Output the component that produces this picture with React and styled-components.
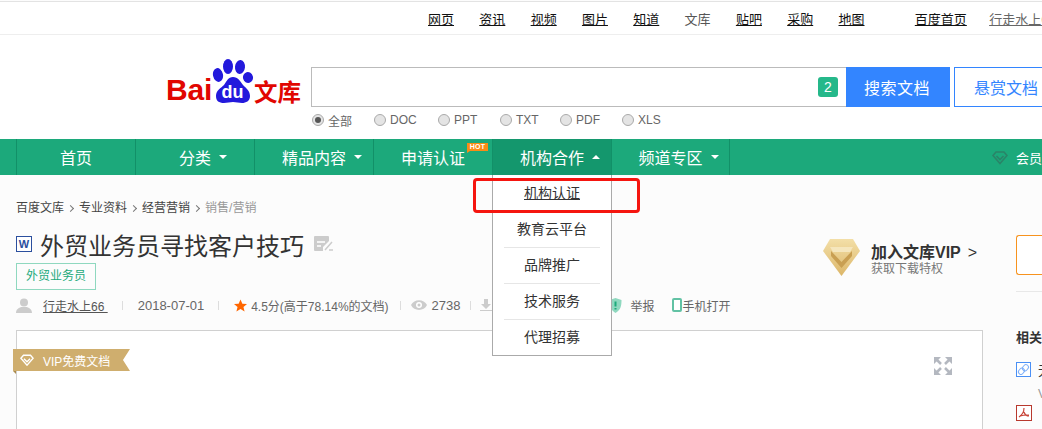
import styled, { createGlobalStyle } from 'styled-components';

const GlobalStyle = createGlobalStyle`
  html, body {
    margin: 0;
    padding: 0;
    height: 100%;
    overflow: hidden;
    background: #fcfcfc;
  }
  body {
    font-family: "Liberation Sans", "Noto Sans CJK SC", sans-serif;
    color: #333;
  }
`;

const Page = styled.div`
  width: 1042px;
  height: 429px;
  overflow: hidden;
  position: relative;
`;

const TopBar = styled.div`
  height: 32px;
  margin-top: 1px;
  border-top: 1px solid #e3e3e3;
  border-bottom: 1px solid #eee;
  background: #fff;
  display: flex;
  align-items: center;
  padding-left: 428px;
  white-space: nowrap;
  font-size: 13px;
`;

const TopLink = styled.a`
  color: ${({ $plain }) => ($plain ? '#555' : '#111')};
  text-decoration: ${({ $plain }) => ($plain ? 'none' : 'underline')};
  margin-right: 25.3px;
`;

const TopSep = styled.span`
  width: 1px;
  height: 12px;
  background: #eee;
  margin: 0 23px 0 2px;
`;

const UserLink = styled.a`
  color: #666;
  text-decoration: underline;
  margin-left: -3px;
`;

const Header = styled.div`
  height: 104px;
  background: #fff;
  padding-left: 166px;
  display: flex;
  align-items: flex-start;
`;

const Logo = styled.div`
  width: 135px;
  height: 46px;
  margin-top: 23px;
  margin-right: 10px;
  display: flex;
  align-items: flex-end;
  flex-shrink: 0;
`;

const LogoLatin = styled.span`
  font-size: 30px;
  line-height: 30px;
  font-weight: 700;
  color: #e10601;
  width: 46px;
  letter-spacing: -0.2px;
  margin-bottom: -1px;
`;

const LogoCjk = styled.span`
  font-family: "Noto Sans CJK SC", sans-serif;
  font-size: 23.5px;
  line-height: 26px;
  font-weight: 700;
  color: #e10601;
  white-space: nowrap;
`;

const SearchArea = styled.div`
  margin-top: 32px;
  width: 760px;
  flex-shrink: 0;
`;

const SearchRow = styled.div`
  display: flex;
  height: 40px;
`;

const SearchInput = styled.div`
  width: 535px;
  box-sizing: border-box;
  border: 1px solid #bbb;
  border-right: none;
  background: #fff;
  display: flex;
  align-items: center;
  justify-content: flex-end;
  padding-right: 8px;
`;

const CountBadge = styled.span`
  width: 20px;
  height: 20px;
  border-radius: 3px;
  background: #25b88a;
  color: #fff;
  font-size: 14px;
  display: flex;
  align-items: center;
  justify-content: center;
`;

const SearchButton = styled.button`
  width: 104px;
  height: 40px;
  border: none;
  padding: 0 2px 0 0;
  background: #3385ff;
  color: #fff;
  font: inherit;
  font-size: 16px;
  letter-spacing: 0.5px;
`;

const RewardButton = styled.button`
  width: 104px;
  height: 40px;
  margin-left: 4px;
  border: 1px solid #3385ff;
  padding: 0;
  background: #fff;
  color: #3385ff;
  font: inherit;
  font-size: 16px;
`;

const RadioRow = styled.div`
  display: flex;
  margin: 5px 0 0 1px;
  height: 16px;
  align-items: center;
  font-size: 12px;
  color: #666;
`;

const RadioOption = styled.label`
  display: flex;
  align-items: center;
  gap: 4px;
  width: ${({ $w }) => $w}px;
`;

const RadioDot = styled.span`
  width: 12px;
  height: 12px;
  box-sizing: border-box;
  border-radius: 50%;
  border: 1px solid #aaa;
  background: #e4e4e4;
  display: flex;
  align-items: center;
  justify-content: center;
  &::after {
    content: '';
    width: 6px;
    height: 6px;
    border-radius: 50%;
    background: ${({ $on }) => ($on ? '#555' : 'transparent')};
  }
`;

const Nav = styled.nav`
  height: 36px;
  background: #1ca97b;
  display: flex;
  padding-left: 16px;
  position: relative;
  color: #fff;
`;

const NavItem = styled.div`
  width: 119px;
  box-sizing: border-box;
  flex-shrink: 0;
  border-left: 1px solid #129068;
  border-right: ${({ $last }) => ($last ? '1px solid #129068' : 'none')};
  background: ${({ $active }) => ($active ? '#14976d' : 'transparent')};
  display: flex;
  align-items: center;
  justify-content: center;
  font-size: 16px;
  position: relative;
`;

const NavLabel = styled.span`
  position: relative;
`;

const Caret = styled.span`
  position: absolute;
  right: -16px;
  top: 50%;
  margin-top: -2px;
  width: 0;
  height: 0;
  border-left: 4px solid transparent;
  border-right: 4px solid transparent;
  ${({ $up }) =>
    $up ? 'border-bottom: 4px solid #fff;' : 'border-top: 4px solid #fff;'}
`;

const HotTag = styled.span`
  position: absolute;
  left: 93px;
  top: 4px;
  width: 21px;
  height: 8px;
  background: #fa8c16;
  color: #fff;
  font-size: 7px;
  line-height: 8px;
  font-weight: 700;
  text-align: center;
  letter-spacing: 0.3px;
  &::after {
    content: '';
    position: absolute;
    left: 0;
    top: 8px;
    border-top: 2px solid #fa8c16;
    border-right: 3px solid transparent;
  }
`;

const NavRight = styled.div`
  margin-left: auto;
  display: flex;
  align-items: center;
  gap: 8px;
  font-size: 13px;
  white-space: nowrap;
  width: 50px;
`;

const Dropdown = styled.div`
  position: absolute;
  left: 492px;
  top: 175px;
  width: 120px;
  height: 181px;
  box-sizing: border-box;
  border: 1px solid #aaa;
  border-top: none;
  background: #fff;
  z-index: 5;
  padding: 0 11px;
`;

const DropItem = styled.a`
  display: block;
  height: 36px;
  line-height: ${({ $first, $noLine }) => ($first || $noLine ? 36 : 34)}px;
  text-align: center;
  font-size: 14px;
  color: #333;
  box-sizing: border-box;
  border-top: ${({ $first, $noLine }) =>
    $first || $noLine ? 'none' : '1px solid #e6e6e6'};
  text-decoration: ${({ $first }) => ($first ? 'underline' : 'none')};
`;

const RedMark = styled.div`
  position: absolute;
  left: 473px;
  top: 178px;
  width: 167px;
  height: 35px;
  box-sizing: border-box;
  border: 3px solid #f5150f;
  border-radius: 4px;
  z-index: 6;
`;

const Content = styled.div`
  padding: 26px 0 0 16px;
`;

const Crumbs = styled.div`
  display: flex;
  gap: 4px;
  font-size: 12px;
  line-height: 14px;
  color: #444;
  align-items: center;
`;

const CrumbArrow = styled.span`
  width: 4px;
  height: 4px;
  border-top: 1px solid #777;
  border-right: 1px solid #777;
  transform: rotate(45deg);
  margin: 0 2px 0 0;
`;

const CrumbLast = styled.span`
  color: #999;
`;

const HeadRow = styled.div`
  display: flex;
  height: 64px;
  margin-top: 11px;
`;

const HeadLeft = styled.div`
  width: 807px;
  flex-shrink: 0;
`;

const TitleRow = styled.div`
  display: flex;
  align-items: center;
  height: 36px;
  gap: 8px;
`;

const Title = styled.h1`
  margin: 0 2px 0 0;
  font-size: 24px;
  font-weight: 400;
  color: #333;
  white-space: nowrap;
`;

const WordIcon = styled.span`
  width: 16px;
  height: 16px;
  box-sizing: border-box;
  border: 1px solid #2b4f9e;
  color: #2b4f9e;
  font-size: 11px;
  line-height: 14px;
  font-weight: 700;
  text-align: center;
  background: #fff;
`;

const Tag = styled.span`
  display: block;
  width: 80px;
  height: 27px;
  line-height: 25px;
  box-sizing: border-box;
  text-align: center;
  border: 1px solid #8fd8bf;
  color: #1ca97b;
  font-size: 12px;
  margin-top: 1px;
`;

const VipPromo = styled.div`
  display: flex;
  align-items: flex-start;
  gap: 11px;
  width: 193px;
  flex-shrink: 0;
  padding-top: 13px;
`;

const VipText = styled.div`
  display: flex;
  flex-direction: column;
  padding-top: 5px;
`;

const VipTitle = styled.div`
  font-size: 16px;
  line-height: 18px;
  font-weight: 700;
  white-space: nowrap;
  color: #333;
`;

const VipArrow = styled.span`
  font-weight: 400;
  margin-left: 7px;
`;

const VipSub = styled.div`
  font-size: 12px;
  line-height: 14px;
  color: #777;
`;

const RightCol = styled.div`
  width: 40px;
  flex-shrink: 0;
  padding-top: 9px;
`;

const OrangeBox = styled.div`
  height: 40px;
  box-sizing: border-box;
  border: 1px solid #f7931e;
  border-right: none;
  border-radius: 3px 0 0 3px;
  background: #fff;
`;

const RightLine = styled.div`
  height: 1px;
  margin-top: 16px;
  background: #e8e8e8;
`;

const MetaRow = styled.div`
  display: flex;
  align-items: center;
  height: 22px;
  margin-top: 4px;
  font-size: 12px;
  color: #666;
  white-space: nowrap;
`;

const MetaSep = styled.span`
  width: 1px;
  height: 9px;
  background: #ddd;
  margin: 0 ${({ $r }) => $r}px 0 ${({ $l }) => $l}px;
`;

const MetaNumber = styled.span`
  font-size: 13px;
`;

const AuthorLink = styled.a`
  color: #555;
  text-decoration: underline;
  margin-left: 7px;
`;

const MetaIcon = styled.svg`
  flex-shrink: 0;
  margin-right: ${({ $gap }) => $gap || 4}px;
`;

const MetaAction = styled.span`
  display: flex;
  align-items: center;
  margin-left: ${({ $l }) => $l}px;
`;

const DocRow = styled.div`
  display: flex;
  margin-top: 14px;
`;

const DocFrame = styled.div`
  width: 967px;
  height: 120px;
  box-sizing: border-box;
  border: 1px solid #d0d0d0;
  border-bottom: none;
  background: #fff;
  flex-shrink: 0;
  position: relative;
`;

const Ribbon = styled.div`
  position: absolute;
  left: -4px;
  top: 18px;
  width: 117px;
  height: 22px;
  background: #cfae6e;
  clip-path: polygon(0 0, 100% 0, 94% 50%, 100% 100%, 0 100%);
  color: #fff;
  font-size: 12px;
  display: flex;
  align-items: center;
  padding-left: 7px;
  gap: 9px;
  box-sizing: border-box;
`;

const RibbonFold = styled.span`
  position: absolute;
  left: -4px;
  top: 40px;
  border-top: 3px solid #a98a4d;
  border-left: 3px solid transparent;
`;

const ExpandIcon = styled.svg`
  position: absolute;
  right: 30px;
  top: 26px;
`;

const Sidebar = styled.div`
  margin-left: 33px;
  width: 40px;
  font-size: 13px;
  white-space: nowrap;
`;

const SideHeading = styled.div`
  font-weight: 700;
  color: #333;
  line-height: 16px;
`;

const SideRow = styled.div`
  display: flex;
  align-items: center;
  gap: 7px;
  margin-top: ${({ $mt }) => $mt}px;
`;

const SideMeta = styled.div`
  margin: 8px 0 0 22px;
  height: 14px;
  line-height: 14px;
  font-size: 12px;
  color: #999;
`;

const Diamond = ({ size = 16, color = '#fff' }) => (
  <svg width={size} height={size} viewBox="0 0 16 16" fill="none" stroke={color} strokeWidth="1.6">
    <path d="M4 2.500h8l3 3.500-7 8-7-8z" />
    <path d="M4.500 6.500L8 10l3.500-3.500" />
  </svg>
);

const BaiduPaw = () => (
  <svg width="42" height="46" viewBox="0 0 42 46">
    <g fill="#2319dc">
      <ellipse cx="6" cy="17" rx="5" ry="7" transform="rotate(-12 6 17)" />
      <ellipse cx="16" cy="8.500" rx="5" ry="7.500" />
      <ellipse cx="28" cy="9" rx="5" ry="7" transform="rotate(6 28 9)" />
      <ellipse cx="36" cy="19.500" rx="5" ry="5.500" transform="rotate(-15 36 19.500)" />
      <path d="M21 19c5 0 7 4 10 8 3 3 7 6 7 11 0 5-4 7-8 7-3 0-6-1-9-1s-6 1-9 1c-5 0-8-2-8-7 0-6 5-8 8-11 3-4 4-8 9-8z" />
    </g>
    <text x="20.500" y="40" textAnchor="middle" fontSize="18" fontWeight="700" fontFamily="Liberation Sans" fill="#fff">du</text>
  </svg>
);

const GoldDiamond = () => (
  <svg width="37" height="37" viewBox="0 0 37 37">
    <defs>
      <linearGradient id="goldFill" x1="0" y1="0" x2="0" y2="1">
        <stop offset="0" stopColor="#f3dfa8" />
        <stop offset="1" stopColor="#dcb668" />
      </linearGradient>
    </defs>
    <path d="M7 0h23l7 12-18.500 25L0 12z" fill="url(#goldFill)" />
    <path d="M7 8h23l-3 5H10z" fill="#f5e6bd" />
    <path d="M8 12l10.500 11L29 12v5L18.500 29 8 17z" fill="#c99f52" />
  </svg>
);

const navItems = [
  { label: '首页' },
  { label: '分类', caret: true },
  { label: '精品内容', caret: true },
  { label: '申请认证', hot: true },
  { label: '机构合作', caret: true, active: true },
  { label: '频道专区', caret: true, last: true },
];

const topLinks = ['网页', '资讯', '视频', '图片', '知道', '文库', '贴吧', '采购', '地图'];
const radios = [
  { label: '全部', w: 62, on: true },
  { label: 'DOC', w: 64 },
  { label: 'PPT', w: 62 },
  { label: 'TXT', w: 60 },
  { label: 'PDF', w: 62 },
  { label: 'XLS', w: 60 },
];
const dropItems = ['机构认证', '教育云平台', '品牌推广', '技术服务', '代理招募'];

export default function App() {
  return (
    <Page>
      <GlobalStyle />
      <TopBar>
        {topLinks.map((t) => (
          <TopLink key={t} $plain={t === '文库'}>{t}</TopLink>
        ))}
        <TopSep />
        <TopLink>百度首页</TopLink>
        <UserLink>行走水上66</UserLink>
      </TopBar>

      <Header>
        <Logo>
          <LogoLatin>Bai</LogoLatin>
          <BaiduPaw />
          <LogoCjk>文库</LogoCjk>
        </Logo>
        <SearchArea>
          <SearchRow>
            <SearchInput>
              <CountBadge>2</CountBadge>
            </SearchInput>
            <SearchButton>搜索文档</SearchButton>
            <RewardButton>悬赏文档</RewardButton>
          </SearchRow>
          <RadioRow>
            {radios.map((r) => (
              <RadioOption key={r.label} $w={r.w}>
                <RadioDot $on={r.on} />
                {r.label}
              </RadioOption>
            ))}
          </RadioRow>
        </SearchArea>
      </Header>

      <Nav>
        {navItems.map((n) => (
          <NavItem key={n.label} $active={n.active} $last={n.last}>
            <NavLabel>
              {n.label}
              {n.caret && <Caret $up={n.active} />}
            </NavLabel>
            {n.hot && <HotTag>HOT</HotTag>}
          </NavItem>
        ))}
        <NavRight>
          <Diamond size={17} color="#2a8468" />
          会员
        </NavRight>
      </Nav>

      <Dropdown>
        {dropItems.map((d, i) => (
          <DropItem key={d} $first={i === 0} $noLine={i === 1}>{d}</DropItem>
        ))}
      </Dropdown>
      <RedMark />

      <Content>
        <Crumbs>
          百度文库 <CrumbArrow /> 专业资料 <CrumbArrow /> 经营营销 <CrumbArrow />
          <CrumbLast>销售/营销</CrumbLast>
        </Crumbs>

        <HeadRow>
          <HeadLeft>
            <TitleRow>
              <WordIcon>W</WordIcon>
              <Title>外贸业务员寻找客户技巧</Title>
              <svg width="20" height="16" viewBox="0 0 20 16" fill="none">
                <path d="M1 0h13a1 1 0 0 1 1 1v4l-6 6v4H1a1 1 0 0 1-1-1V1a1 1 0 0 1 1-1z" fill="#ccc" />
                <path d="M3 6h8M3 10h4" stroke="#fff" strokeWidth="1.600" />
                <path d="M11 14l7-8M15 14h4" stroke="#ccc" strokeWidth="1.500" />
              </svg>
            </TitleRow>
            <Tag>外贸业务员</Tag>
          </HeadLeft>
          <VipPromo>
            <GoldDiamond />
            <VipText>
              <VipTitle>加入文库VIP<VipArrow>&gt;</VipArrow></VipTitle>
              <VipSub>获取下载特权</VipSub>
            </VipText>
          </VipPromo>
          <RightCol>
            <OrangeBox />
            <RightLine />
          </RightCol>
        </HeadRow>

        <MetaRow>
          <MetaIcon width="16" height="15" viewBox="0 0 16 15">
            <circle cx="8" cy="4.500" r="4" fill="#ccc" />
            <path d="M0 15c0-4 3-5 5-6h6c2 1 5 2 5 6z" fill="#ccc" />
          </MetaIcon>
          <AuthorLink>行走水上66&nbsp;</AuthorLink>
          <MetaSep $l={14} $r={15} />
          <MetaNumber>2018-07-01</MetaNumber>
          <MetaSep $l={14} $r={15} />
          <MetaIcon width="13" height="13" viewBox="0 0 14 13" $gap={4}>
            <path d="M7 0l2 4.600 5 .4-3.800 3.200L11.400 13 7 10.400 2.600 13l1.200-4.800L0 5l5-.4z" fill="#f60" />
          </MetaIcon>
          4.5分(高于78.14%的文档)
          <MetaSep $l={11} $r={10} />
          <MetaIcon width="16" height="10" viewBox="0 0 16 10" $gap={5}>
            <path d="M0 5c3-6.500 13-6.500 16 0-3 6.500-13 6.500-16 0z" fill="#ccc" />
            <circle cx="8" cy="5" r="3" fill="#fff" />
            <circle cx="8" cy="5" r="1.500" fill="#ccc" />
          </MetaIcon>
          <MetaNumber>2738</MetaNumber>
          <MetaSep $l={10} $r={9} />
          <MetaIcon width="12" height="12" viewBox="0 0 12 12">
            <path d="M4 0h4v5h3L6 10 1 5h3zM0 11h12v1H0z" fill="#ccc" />
          </MetaIcon>
          <MetaAction $l={113}>
            <MetaIcon width="13" height="15" viewBox="0 0 13 15" $gap={8}>
              <path d="M6.500 0l6 2c0 6-1 10-6 13C1.500 12 .5 8 .5 2z" fill="#8fd8bf" />
              <path d="M6.500 3.500v5M6.500 10v1.500" stroke="#1ca97b" strokeWidth="2" />
            </MetaIcon>
            举报
          </MetaAction>
          <MetaAction $l={17}>
            <MetaIcon width="10" height="14" viewBox="0 0 10 14" $gap={1}>
              <rect x="1" y="1" width="8" height="12" rx="1" fill="#fff" stroke="#62c2a4" strokeWidth="2" />
            </MetaIcon>
            手机打开
          </MetaAction>
        </MetaRow>

        <DocRow>
          <DocFrame>
            <Ribbon>
              <Diamond size={14} />
              VIP免费文档
            </Ribbon>
            <RibbonFold />
            <ExpandIcon width="18" height="18" viewBox="0 0 18 18" fill="#b4b8c0" stroke="#b4b8c0">
              <path d="M0 0h7L0 7zM18 0h-7l7 7zM0 18h7l-7-7zM18 18h-7l7-7z" stroke="none" />
              <path d="M3 3l4 4M15 3l-4 4M3 15l4-4M15 15l-4-4" strokeWidth="2.500" />
            </ExpandIcon>
          </DocFrame>
          <Sidebar>
            <SideHeading>相关</SideHeading>
            <SideRow $mt={14}>
              <svg width="15" height="15" viewBox="0 0 15 15" fill="none">
                <rect x=".5" y=".5" width="14" height="14" fill="#fff" stroke="#4a90f5" />
                <rect x="7" y="2.500" width="5" height="6.500" rx="2.400" transform="rotate(40 9.500 5.700)" stroke="#7fb0f8" />
                <rect x="3" y="6" width="5" height="6.500" rx="2.400" transform="rotate(40 5.500 9.200)" stroke="#7fb0f8" />
              </svg>
              无
            </SideRow>
            <SideMeta>V</SideMeta>
            <SideRow $mt={4}>
              <svg width="16" height="16" viewBox="0 0 16 16" fill="none">
                <rect x=".5" y=".5" width="15" height="15" fill="#fff" stroke="#b8392e" />
                <path d="M8 3c0 4-2 7-5 9M8 7c1 3 3 4 5 4M4 11c3-1 6-1 9-1" stroke="#c9473b" strokeWidth="1.200" />
              </svg>
            </SideRow>
          </Sidebar>
        </DocRow>
      </Content>
    </Page>
  );
}
